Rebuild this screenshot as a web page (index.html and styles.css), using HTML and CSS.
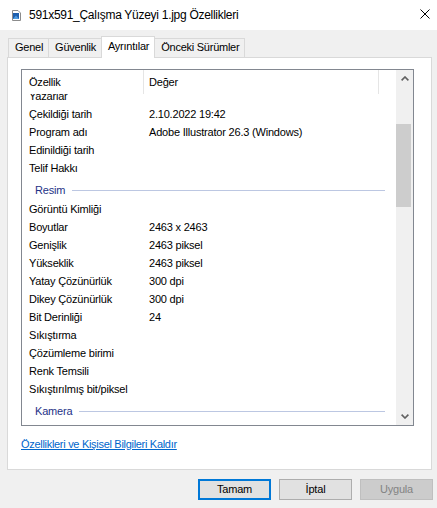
FILE: index.html
```html
<!DOCTYPE html>
<html lang="tr">
<head>
<meta charset="utf-8">
<title>Özellikler</title>
<link rel="stylesheet" href="styles.css">
</head>
<body>
<div class="window">
  <div class="titlebar">
    <svg class="ficon" width="9" height="11" viewBox="0 0 9 11">
      <path d="M0.5 0.5 H6 L8.5 3 V10.5 H0.5 Z" fill="#fff" stroke="#8c8c8c"/>
      <rect x="1" y="3" width="6" height="6" fill="#1f5fae"/>
      <path d="M1 9 L4 5.5 L7 9 Z" fill="#4f9be0"/>
    </svg>
    <span class="title">591x591_Çalışma Yüzeyi 1.jpg Özellikleri</span>
    <svg class="close" width="10" height="10" viewBox="0 0 10 10">
      <path d="M0.5 0.5 L9.5 9.5 M9.5 0.5 L0.5 9.5" stroke="#000" stroke-width="1"/>
    </svg>
  </div>

  <div class="tabs">
    <div class="tab">Genel</div>
    <div class="tab">Güvenlik</div>
    <div class="tab active">Ayrıntılar</div>
    <div class="tab">Önceki Sürümler</div>
  </div>

  <div class="panel">
    <div class="list">
      <div class="listmain">
        <div class="lhead">
          <div class="hc c1">Özellik</div>
          <div class="hc c2">Değer</div>
          <div class="hc c3"></div>
        </div>
        <div class="lbody">
          <div class="lscroll">
            <div class="row"><span class="name">Yazarlar</span><span class="val"></span></div>
            <div class="row"><span class="name">Çekildiği tarih</span><span class="val">2.10.2022 19:42</span></div>
            <div class="row"><span class="name">Program adı</span><span class="val">Adobe Illustrator 26.3 (Windows)</span></div>
            <div class="row"><span class="name">Edinildiği tarih</span><span class="val"></span></div>
            <div class="row"><span class="name">Telif Hakkı</span><span class="val"></span></div>
            <div class="group"><span>Resim</span></div>
            <div class="row"><span class="name">Görüntü Kimliği</span><span class="val"></span></div>
            <div class="row"><span class="name">Boyutlar</span><span class="val">2463 x 2463</span></div>
            <div class="row"><span class="name">Genişlik</span><span class="val">2463 piksel</span></div>
            <div class="row"><span class="name">Yükseklik</span><span class="val">2463 piksel</span></div>
            <div class="row"><span class="name">Yatay Çözünürlük</span><span class="val">300 dpi</span></div>
            <div class="row"><span class="name">Dikey Çözünürlük</span><span class="val">300 dpi</span></div>
            <div class="row"><span class="name">Bit Derinliği</span><span class="val">24</span></div>
            <div class="row"><span class="name">Sıkıştırma</span><span class="val"></span></div>
            <div class="row"><span class="name">Çözümleme birimi</span><span class="val"></span></div>
            <div class="row"><span class="name">Renk Temsili</span><span class="val"></span></div>
            <div class="row"><span class="name">Sıkıştırılmış bit/piksel</span><span class="val"></span></div>
            <div class="group"><span>Kamera</span></div>
          </div>
        </div>
      </div>
      <div class="vscroll">
        <div class="arrow">
          <svg width="8" height="5" viewBox="0 0 8 5"><polyline points="0.6,4.4 4,1 7.4,4.4" fill="none" stroke="#606060" stroke-width="1.6"/></svg>
        </div>
        <div class="track"><div class="thumb"></div></div>
        <div class="arrow">
          <svg width="8" height="5" viewBox="0 0 8 5"><polyline points="0.6,0.6 4,4 7.4,0.6" fill="none" stroke="#606060" stroke-width="1.6"/></svg>
        </div>
      </div>
    </div>
    <a class="link" href="#">Özellikleri ve Kişisel Bilgileri Kaldır</a>
  </div>

  <div class="buttons">
    <div class="btn default">Tamam</div>
    <div class="btn">İptal</div>
    <div class="btn disabled">Uygula</div>
  </div>
</div>
</body>
</html>
```
FILE: styles.css
```css
html, body {
  margin: 0;
  padding: 0;
}
body {
  background: #f0f0f0;
  font-family: "Liberation Sans", Arial, sans-serif;
  font-size: 11px;
  letter-spacing: -0.2px;
  color: #000;
}
.window {
  width: 437px;
  height: 508px;
  display: flex;
  flex-direction: column;
  overflow: hidden;
}

/* title bar */
.titlebar {
  height: 30px;
  flex: none;
  background: #fff;
  display: flex;
  align-items: center;
}
.ficon {
  margin-left: 12px;
  flex: none;
}
.title {
  margin-left: 8px;
  font-size: 12px;
  letter-spacing: -0.28px;
  white-space: nowrap;
}
.close {
  margin-left: auto;
  margin-right: 7px;
  align-self: flex-start;
  margin-top: 9px;
  flex: none;
}

/* tabs */
.tabs {
  height: 19px;
  flex: none;
  margin-top: 8px;
  padding-left: 8px;
  display: flex;
  align-items: flex-end;
  position: relative;
  z-index: 1;
}
.tab {
  height: 19px;
  box-sizing: border-box;
  border: 1px solid #d9d9d9;
  border-bottom: none;
  background: #f0f0f0;
  padding: 0 5px 0 6px;
  line-height: 17px;
  letter-spacing: -0.25px;
  white-space: nowrap;
}
.tab + .tab {
  margin-left: -1px;
}
.tab.active {
  height: 22px;
  margin-bottom: -1px;
  background: #fff;
  line-height: 18px;
  position: relative;
  z-index: 2;
}

/* panel */
.panel {
  flex: none;
  height: 413px;
  margin: 0 5px 0 7px;
  box-sizing: border-box;
  border: 1px solid #d9d9d9;
  background: #fff;
  padding: 11px 0 0 13px;
}
.list {
  width: 393px;
  height: 357px;
  box-sizing: border-box;
  border: 1px solid #828790;
  display: flex;
}
.listmain {
  flex: 1;
  min-width: 0;
  display: flex;
  flex-direction: column;
}
.lhead {
  height: 24px;
  flex: none;
  display: flex;
  background: #fff;
}
.hc {
  height: 24px;
  box-sizing: border-box;
  padding-top: 2px;
  line-height: 21px;
  border-right: 1px solid #e5e5e5;
}
.hc.c1 {
  width: 122px;
  padding-left: 7px;
}
.hc.c2 {
  width: 235px;
  padding-left: 5px;
}
.hc.c3 {
  flex: 1;
  border-right: none;
}
.lbody {
  flex: 1;
  overflow: hidden;
}
.lscroll {
  margin-top: -7px;
}
.row {
  height: 18px;
  line-height: 18px;
  display: flex;
  white-space: nowrap;
}
.name {
  width: 127px;
  box-sizing: border-box;
  padding-left: 7px;
  flex: none;
}
.val {
  flex: 1;
}
.group {
  height: 23px;
  box-sizing: border-box;
  padding: 4px 0 1px 13px;
  line-height: 18px;
  display: flex;
  align-items: center;
  color: #1e3287;
}
.group::after {
  content: "";
  flex: 1;
  height: 1px;
  background: #bcc7e2;
  margin-left: 7px;
  margin-right: 11px;
}

/* scrollbar */
.vscroll {
  width: 17px;
  flex: none;
  background: #f0f0f0;
  display: flex;
  flex-direction: column;
}
.arrow {
  height: 17px;
  flex: none;
  display: flex;
  align-items: center;
  justify-content: center;
}
.track {
  flex: 1;
}
.thumb {
  width: 15px;
  height: 83px;
  margin-top: 37px;
  background: #cdcdcd;
}

/* link */
.link {
  display: inline-block;
  margin-top: 11px;
  line-height: 14px;
  letter-spacing: -0.3px;
  color: #0066cc;
  text-decoration: underline;
}

/* buttons */
.buttons {
  flex: none;
  display: flex;
  gap: 8px;
  margin-top: 9px;
  padding-left: 198px;
}
.btn {
  width: 73px;
  height: 21px;
  box-sizing: border-box;
  border: 1px solid #adadad;
  background: #e1e1e1;
  text-align: center;
  line-height: 19px;
}
.btn.default {
  border: 2px solid #0078d7;
  line-height: 17px;
}
.btn.disabled {
  background: #cccccc;
  border-color: #bfbfbf;
  color: #838383;
}
```
